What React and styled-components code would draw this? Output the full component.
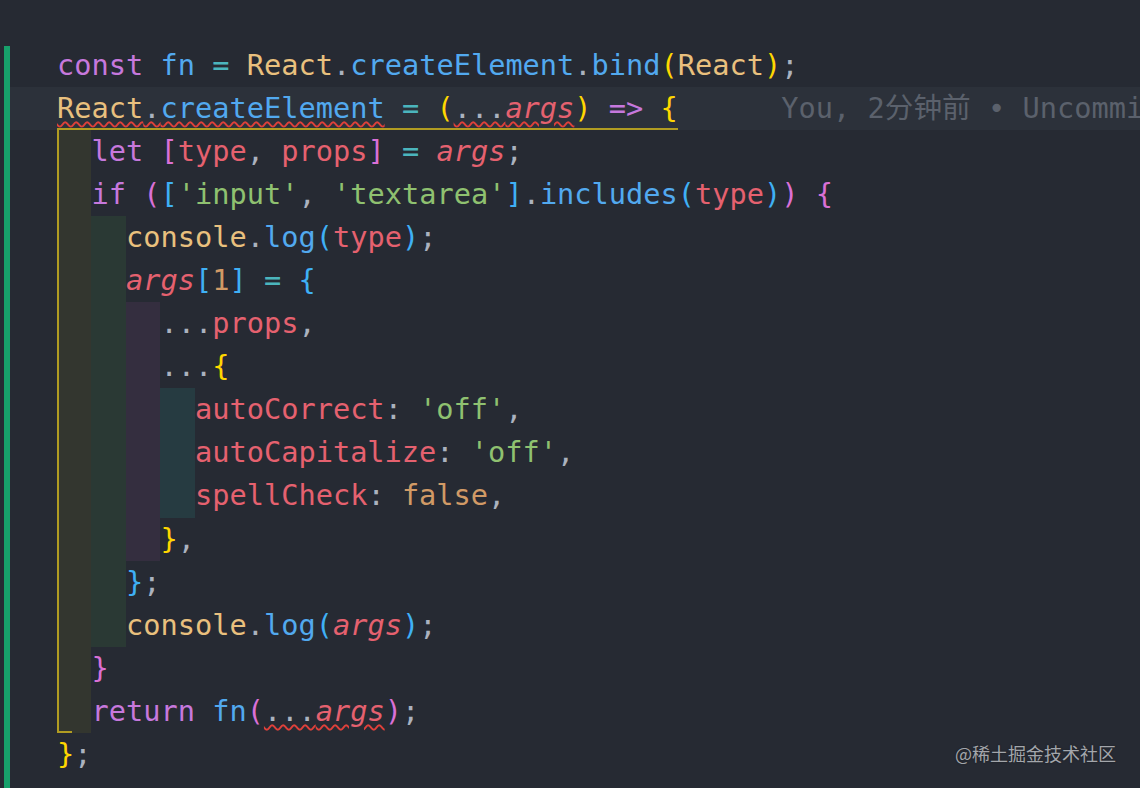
import React from "react";
import styled, { createGlobalStyle } from "styled-components";

const GlobalStyle = createGlobalStyle`
  html, body {
    margin: 0;
    padding: 0;
    background: #262a33;
  }
  body {
    width: 1140px;
    height: 788px;
    overflow: hidden;
  }
`;

const COLORS = {
  kw: "#c678dd",
  fn: "#52a9ef",
  op: "#4bb5bd",
  cls: "#e9c07e",
  punc: "#abb2bf",
  vr: "#e5616f",
  str: "#8fc170",
  num: "#d19a66",
  b1: "#ffd700",
  b2: "#da70d6",
  b3: "#3fb0f5",
};

const INDENT_COLORS = ["#33362f", "#2a3934", "#342e3f", "#263b41"];
const GUIDE = "#b19c22";

// token helpers
const t = (k, s, it) => ({ k, s, it });
const sp = { k: "punc", s: " " };
const sq = (...items) => ({ sq: items });

const lines = [
  {
    indent: 0,
    tokens: [
      t("kw", "const"), sp, t("fn", "fn"), sp, t("op", "="), sp,
      t("cls", "React"), t("punc", "."), t("fn", "createElement"), t("punc", "."),
      t("fn", "bind"), t("b1", "("), t("cls", "React"), t("b1", ")"), t("punc", ";"),
    ],
  },
  {
    indent: 0,
    active: true,
    tokens: [
      sq(t("cls", "React"), t("punc", "."), t("fn", "createElement")),
      sp, t("op", "="), sp, t("b1", "("),
      sq(t("punc", "..."), t("vr", "args", true)),
      t("b1", ")"), sp, t("kw", "=>"), sp, t("b1", "{"),
    ],
  },
  {
    indent: 1,
    tokens: [
      t("kw", "let"), sp, t("b2", "["), t("vr", "type"), t("punc", ","), sp,
      t("vr", "props"), t("b2", "]"), sp, t("op", "="), sp, t("vr", "args", true), t("punc", ";"),
    ],
  },
  {
    indent: 1,
    tokens: [
      t("kw", "if"), sp, t("b2", "("), t("b3", "["), t("str", "'input'"), t("punc", ","), sp,
      t("str", "'textarea'"), t("b3", "]"), t("punc", "."), t("fn", "includes"),
      t("b3", "("), t("vr", "type"), t("b3", ")"), t("b2", ")"), sp, t("b2", "{"),
    ],
  },
  {
    indent: 2,
    tokens: [
      t("cls", "console"), t("punc", "."), t("fn", "log"), t("b3", "("),
      t("vr", "type"), t("b3", ")"), t("punc", ";"),
    ],
  },
  {
    indent: 2,
    tokens: [
      t("vr", "args", true), t("b3", "["), t("num", "1"), t("b3", "]"), sp,
      t("op", "="), sp, t("b3", "{"),
    ],
  },
  { indent: 3, tokens: [t("punc", "..."), t("vr", "props"), t("punc", ",")] },
  { indent: 3, tokens: [t("punc", "..."), t("b1", "{")] },
  {
    indent: 4,
    tokens: [t("vr", "autoCorrect"), t("punc", ":"), sp, t("str", "'off'"), t("punc", ",")],
  },
  {
    indent: 4,
    tokens: [t("vr", "autoCapitalize"), t("punc", ":"), sp, t("str", "'off'"), t("punc", ",")],
  },
  {
    indent: 4,
    tokens: [t("vr", "spellCheck"), t("punc", ":"), sp, t("num", "false"), t("punc", ",")],
  },
  { indent: 3, tokens: [t("b1", "}"), t("punc", ",")] },
  { indent: 2, tokens: [t("b3", "}"), t("punc", ";")] },
  {
    indent: 2,
    tokens: [
      t("cls", "console"), t("punc", "."), t("fn", "log"), t("b3", "("),
      t("vr", "args", true), t("b3", ")"), t("punc", ";"),
    ],
  },
  { indent: 1, tokens: [t("b2", "}")] },
  {
    indent: 1,
    guideEnd: true,
    tokens: [
      t("kw", "return"), sp, t("fn", "fn"), t("b2", "("),
      sq(t("punc", "..."), t("vr", "args", true)),
      t("b2", ")"), t("punc", ";"),
    ],
  },
  { indent: 0, tokens: [t("b1", "}"), t("punc", ";")] },
];

const Editor = styled.div`
  position: relative;
  display: flex;
  width: 1140px;
  height: 788px;
  background: #262a33;
  overflow: hidden;
  font-family: "DejaVu Sans Mono", "Noto Sans CJK SC", monospace;
  font-size: 28.65px;
`;

const GitBar = styled.div`
  flex: none;
  width: 6px;
  margin: 46px 0 0 4px;
  background: #17a06b;
`;

const Lines = styled.div`
  flex: 1;
  min-width: 0;
  padding-top: 43.5px;
`;

const Line = styled.div`
  display: flex;
  height: 43.1px;
  line-height: 43.1px;
  padding-left: 47px;
  white-space: pre;
  background: ${(p) => (p.$active ? "#2c313a" : "transparent")};
`;

const Indent = styled.span`
  flex: none;
  width: 2ch;
  background: ${(p) =>
      p.$end ? `linear-gradient(${GUIDE}, ${GUIDE}) left bottom / 15px 2px no-repeat,` : ""}
    ${(p) => INDENT_COLORS[p.$level]};
  box-shadow: ${(p) => (p.$guide ? `inset 2px 0 0 ${GUIDE}` : "none")};
`;

const Code = styled.span`
  flex: none;
  box-shadow: ${(p) => (p.$guide ? `inset 0 -2px 0 ${GUIDE}` : "none")};
`;

const Tok = styled.span`
  color: ${(p) => COLORS[p.$kind]};
  font-style: ${(p) => (p.$italic ? "italic" : "normal")};
`;

const Squiggle = styled.span`
  text-decoration-line: underline;
  text-decoration-style: wavy;
  text-decoration-color: #e0403a;
  text-decoration-thickness: 1.8px;
  text-underline-offset: 3px;
`;

const Blame = styled.span`
  flex: none;
  margin-left: 6ch;
  color: #5b616c;
`;

const Watermark = styled.div`
  position: absolute;
  right: 24px;
  bottom: 22px;
  font-family: "Noto Sans CJK SC", "Noto Sans", sans-serif;
  font-size: 18px;
  color: #a3a6ab;
  text-shadow: 0 0 2px rgba(0, 0, 0, 0.4);
`;

const renderTokens = (tokens) =>
  tokens.map((tok, i) =>
    tok.sq ? (
      <Squiggle key={i}>{renderTokens(tok.sq)}</Squiggle>
    ) : (
      <Tok key={i} $kind={tok.k} $italic={tok.it}>
        {tok.s}
      </Tok>
    )
  );

const App = () => {
  return (
    <>
      <GlobalStyle />
      <Editor>
        <GitBar />
        <Lines>
          {lines.map((line, i) => (
            <Line key={i} $active={line.active}>
              {Array.from({ length: line.indent }).map((_, lvl) => (
                <Indent
                  key={lvl}
                  $level={lvl}
                  $guide={lvl === 0}
                  $end={lvl === 0 && line.guideEnd}
                />
              ))}
              <Code $guide={line.active}>{renderTokens(line.tokens)}</Code>
              {line.active && <Blame>You, 2分钟前 • Uncommitted changes</Blame>}
            </Line>
          ))}
        </Lines>
        <Watermark>@稀土掘金技术社区</Watermark>
      </Editor>
    </>
  );
};

export default App;
